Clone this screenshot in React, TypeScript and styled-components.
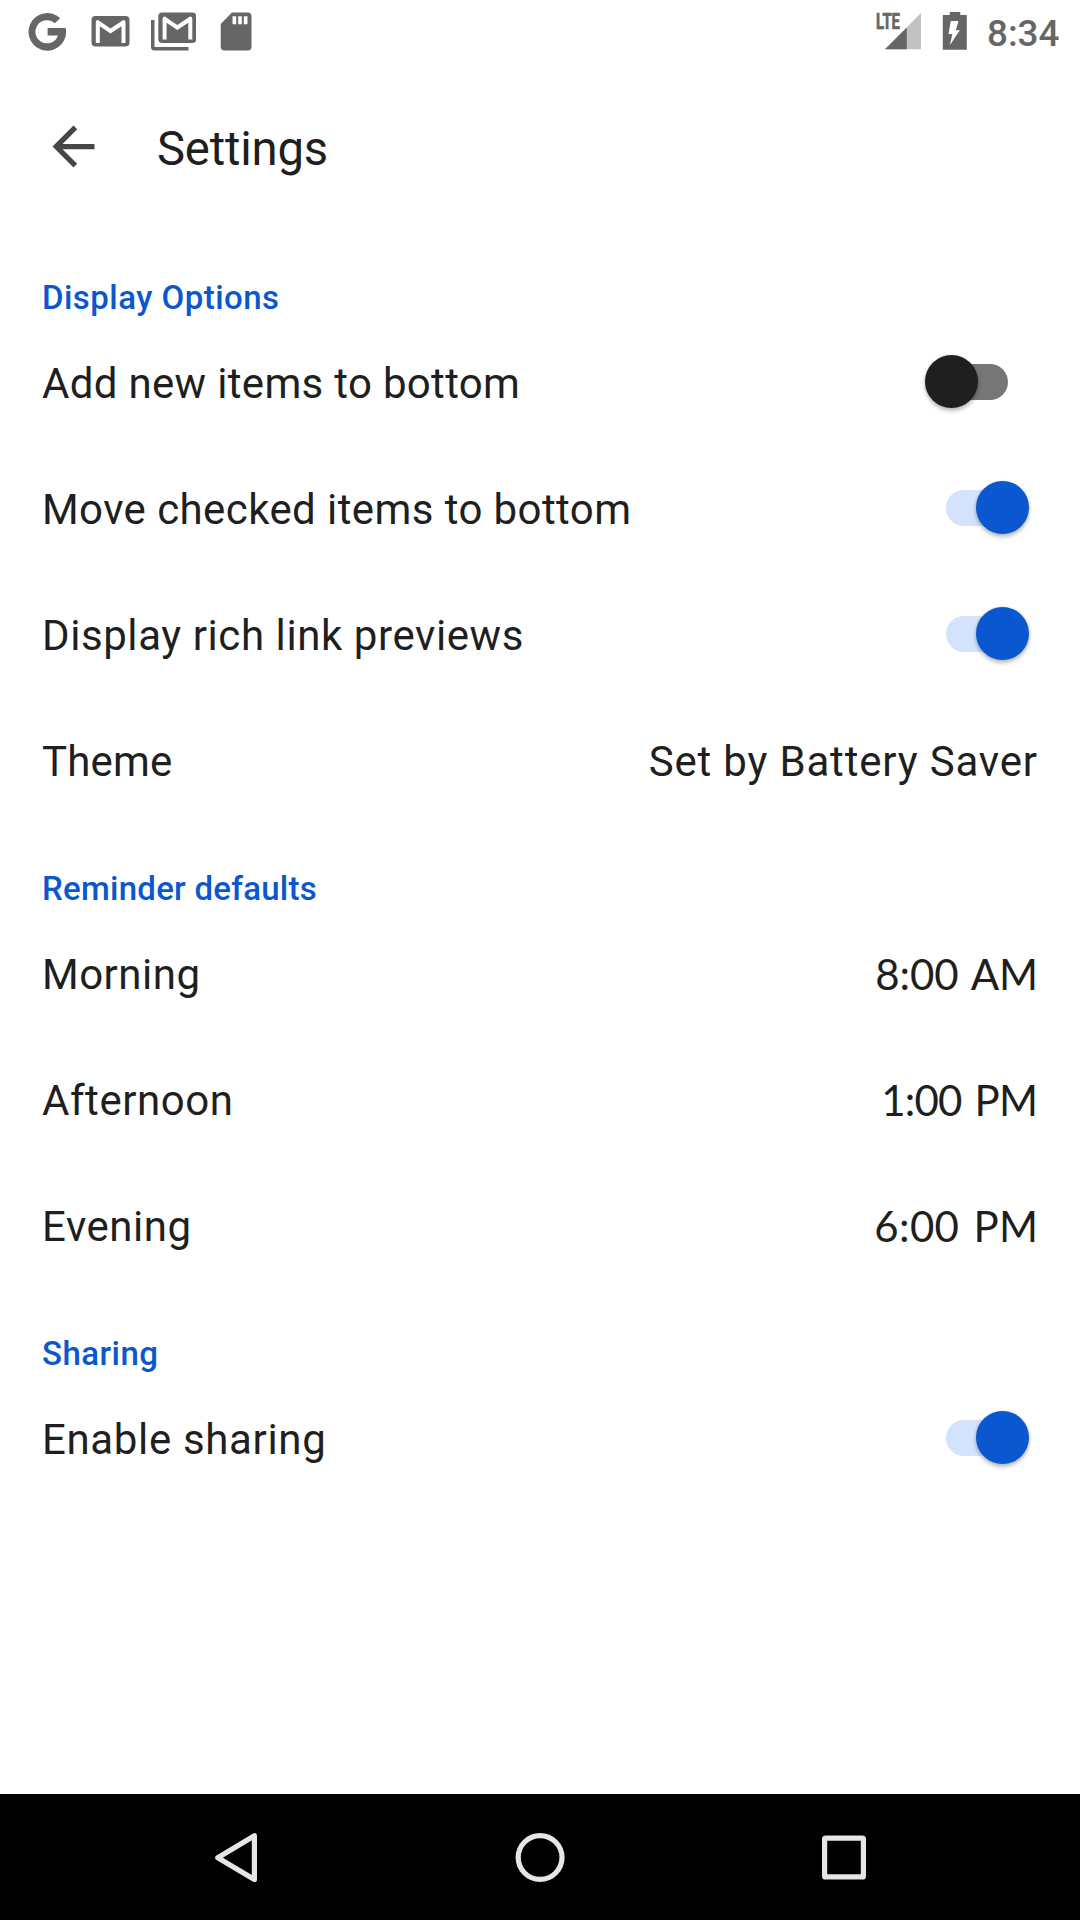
import React, { useState } from 'react';
import styled, { createGlobalStyle } from 'styled-components';

const GlobalStyle = createGlobalStyle`
  *, *::before, *::after { box-sizing: border-box; }
  body { margin: 0; background: #fff; }
`;

const Screen = styled.div`
  display: flex;
  flex-direction: column;
  width: 1080px;
  height: 1920px;
  overflow: hidden;
  background: #fff;
  color: #1f1f1f;
  font-family: Roboto, "Liberation Sans", sans-serif;
`;

const StatusBar = styled.header`
  display: flex;
  justify-content: space-between;
  height: 63px;
  padding: 0 20px 0 28px;
  color: #666;
`;

const StatusGroup = styled.div<{ $gap: number }>`
  display: flex;
  align-items: center;
  gap: ${(p) => p.$gap}px;
`;

const Glyph = styled.svg`
  display: block;
  flex: none;
  fill: currentColor;
`;

const StackedMailGlyph = styled(Glyph)`
  margin-left: -3px;
`;

const Clock = styled.span`
  width: 73px;
  padding-top: 4px;
  font-size: 36.75px;
  font-weight: 500;
  line-height: 59px;
  white-space: nowrap;
`;

const AppBar = styled.div`
  display: flex;
  align-items: center;
  gap: 52px;
  height: 167px;
  padding-left: 42px;
`;

const BackButton = styled.button`
  display: flex;
  width: 63px;
  height: 63px;
  padding: 0;
  border: 0;
  background: none;
  color: #444746;
`;

const Title = styled.h1`
  margin: 0;
  padding-top: 4px;
  font-size: 47.25px;
  font-weight: 400;
  letter-spacing: -0.2px;
`;

const Content = styled.main`
  flex: 1;
  padding: 2px 42px 0;
`;

const SectionTitle = styled.h2<{ $tracking: number }>`
  margin: 0;
  padding-top: 45px;
  color: #0b57d0;
  font-size: 33px;
  font-weight: 500;
  line-height: 42px;
  letter-spacing: ${(p) => p.$tracking}px;
`;

const Row = styled.div`
  display: flex;
  align-items: center;
  justify-content: space-between;
  height: 126px;
  font-size: 42px;
  white-space: nowrap;
`;

const Label = styled.span<{ $tracking: number }>`
  padding-top: 3px;
  letter-spacing: ${(p) => p.$tracking}px;
`;

const Value = styled(Label)`
  margin-right: ${(p) => 1 - p.$tracking}px;
`;

const Time = styled.span<{ $tracking: number }>`
  margin-right: ${(p) => -p.$tracking}px;
  padding-top: 2px;
  font-family: Lato, Roboto, sans-serif;
  letter-spacing: ${(p) => p.$tracking}px;
  word-spacing: 3px;
`;

const Track = styled.button<{ $on: boolean }>`
  position: relative;
  width: 80px;
  height: 36px;
  margin-right: ${(p) => (p.$on ? 12 : 30)}px;
  padding: 0;
  border: 0;
  border-radius: 18px;
  background: ${(p) => (p.$on ? '#d3e3fd' : '#757776')};
`;

const Thumb = styled.span<{ $on: boolean }>`
  position: absolute;
  top: -9.3px;
  ${(p) => (p.$on ? 'right: -3px;' : 'left: -3px;')}
  width: 53px;
  height: 53px;
  border-radius: 50%;
  background: ${(p) => (p.$on ? '#0b57d0' : '#1f1f1f')};
  box-shadow: 0 3px 4px rgba(0, 0, 0, 0.26), 0 0 3px rgba(0, 0, 0, 0.12);
`;

const NavBar = styled.nav`
  display: flex;
  align-items: center;
  justify-content: center;
  gap: 241px;
  height: 126px;
  background: #000;
  color: #e6e6e6;
`;

const NavGlyph = styled.svg`
  display: block;
  fill: none;
  stroke: currentColor;
  stroke-width: 5.2;
  stroke-linejoin: round;
`;

const ENVELOPE =
  'M4 0H34Q38 0 38 4V26.5Q38 30.5 34 30.5H4Q0 30.5 0 26.5V4Q0 0 4 0ZM4.3 27V6Q4.3 4 6.5 4L19 12.5L31.7 4Q34 4 34 6V27H30V10.2L19 17.5L8.3 10.2V27Z';

function Switch({ initial, label }: { initial: boolean; label: string }) {
  const [on, setOn] = useState(initial);
  return (
    <Track $on={on} role="switch" aria-checked={on} aria-label={label} onClick={() => setOn(!on)}>
      <Thumb $on={on} />
    </Track>
  );
}

type Item = { label: string; tracking: number; on?: boolean; time?: string; value?: string; endTracking?: number };

const sections: { title: string; tracking: number; items: Item[] }[] = [
  {
    title: 'Display Options',
    tracking: 0.46,
    items: [
      { label: 'Add new items to bottom', tracking: 0.32, on: false },
      { label: 'Move checked items to bottom', tracking: 0.41, on: true },
      { label: 'Display rich link previews', tracking: 0.58, on: true },
      { label: 'Theme', tracking: 0.15, value: 'Set by Battery Saver', endTracking: 0.82 },
    ],
  },
  {
    title: 'Reminder defaults',
    tracking: 0.26,
    items: [
      { label: 'Morning', tracking: 0.5, time: '8:00 AM', endTracking: -0.1 },
      { label: 'Afternoon', tracking: 0.55, time: '1:00 PM', endTracking: -0.8 },
      { label: 'Evening', tracking: 0.55, time: '6:00 PM', endTracking: 0.35 },
    ],
  },
  {
    title: 'Sharing',
    tracking: 0.45,
    items: [{ label: 'Enable sharing', tracking: 0.65, on: true }],
  },
];

export default function App() {
  return (
    <Screen>
      <GlobalStyle />
      <StatusBar>
        <StatusGroup $gap={24}>
          <Glyph width="39" height="63" viewBox="28 0 39 63">
            <path d="M60.2 18.2L54.8 23.2A11.6 11.6 0 1 0 58 35.4H47.6V28H65.7A18.8 18.8 0 1 1 60.2 18.2Z" />
          </Glyph>
          <Glyph width="39" height="63" viewBox="-.5 -16 39 63">
            <path fillRule="evenodd" d={ENVELOPE} />
          </Glyph>
          <StackedMailGlyph width="45" height="63" viewBox="151 0 45 63">
            <path fillRule="evenodd" transform="translate(158.3 12.5)" d={ENVELOPE} />
            <path d="M151 20H154.5V47H188.5V50.5H154.5Q151 50.5 151 47Z" />
          </StackedMailGlyph>
          <Glyph width="32" height="63" viewBox="220.5 0 32 63">
            <path
              fillRule="evenodd"
              d="M232.5 12.5H248Q252 12.5 252 16.5V46.5Q252 50.5 248 50.5H225.2Q221.2 50.5 221.2 46.5V24ZM233 16.3V24.3H236.7V16.3ZM238.7 16.3V24.3H242.3V16.3ZM244.3 16.3V24.3H248V16.3Z"
            />
          </Glyph>
        </StatusGroup>
        <StatusGroup $gap={20}>
          <Glyph width="46" height="63" viewBox="875 0 46 63">
            <path d="M921 13V49.3H885Z" fill="#c2c2c2" />
            <path d="M906.8 27.5V49.3H885Z" />
            <text
              x="876"
              y="28.8"
              fontSize="21.5"
              fontWeight="700"
              stroke="currentColor"
              strokeWidth="0.7"
              textLength="24"
              lengthAdjust="spacingAndGlyphs"
            >
              LTE
            </text>
          </Glyph>
          <Glyph width="26" height="63" viewBox="941.2 0 26 63">
            <path
              fillRule="evenodd"
              d="M950 12H960.5V15H967V49.8H943V15H950ZM951 21L948.7 34H952.6L950 45.3L960 30.3H956L958.7 21Z"
            />
          </Glyph>
          <Clock>8:34</Clock>
        </StatusGroup>
      </StatusBar>

      <AppBar>
        <BackButton aria-label="Navigate up">
          <Glyph width="63" height="63" viewBox="0 0 24 24">
            <path d="M20 11H7.83l5.59-5.59L12 4l-8 8 8 8 1.41-1.41L7.83 13H20v-2z" />
          </Glyph>
        </BackButton>
        <Title>Settings</Title>
      </AppBar>

      <Content>
        {sections.map((section) => (
          <section key={section.title}>
            <SectionTitle $tracking={section.tracking}>{section.title}</SectionTitle>
            {section.items.map((item) => (
              <Row key={item.label}>
                <Label $tracking={item.tracking}>{item.label}</Label>
                {item.on !== undefined && <Switch initial={item.on} label={item.label} />}
                {item.value && <Value $tracking={item.endTracking ?? 0}>{item.value}</Value>}
                {item.time && <Time $tracking={item.endTracking ?? 0}>{item.time}</Time>}
              </Row>
            ))}
          </section>
        ))}
      </Content>

      <NavBar>
        <NavGlyph width="63" height="63" viewBox="205 1825.5 63 63">
          <path d="M217.8 1857.2L254.4 1835.2V1879Z" />
        </NavGlyph>
        <NavGlyph width="63" height="63" viewBox="509 1825.5 63 63">
          <circle cx="540.1" cy="1857" r="21.9" />
        </NavGlyph>
        <NavGlyph width="63" height="63" viewBox="813 1825.5 63 63">
          <rect x="824.6" y="1837.6" width="38.8" height="38.8" rx="1" />
        </NavGlyph>
      </NavBar>
    </Screen>
  );
}
